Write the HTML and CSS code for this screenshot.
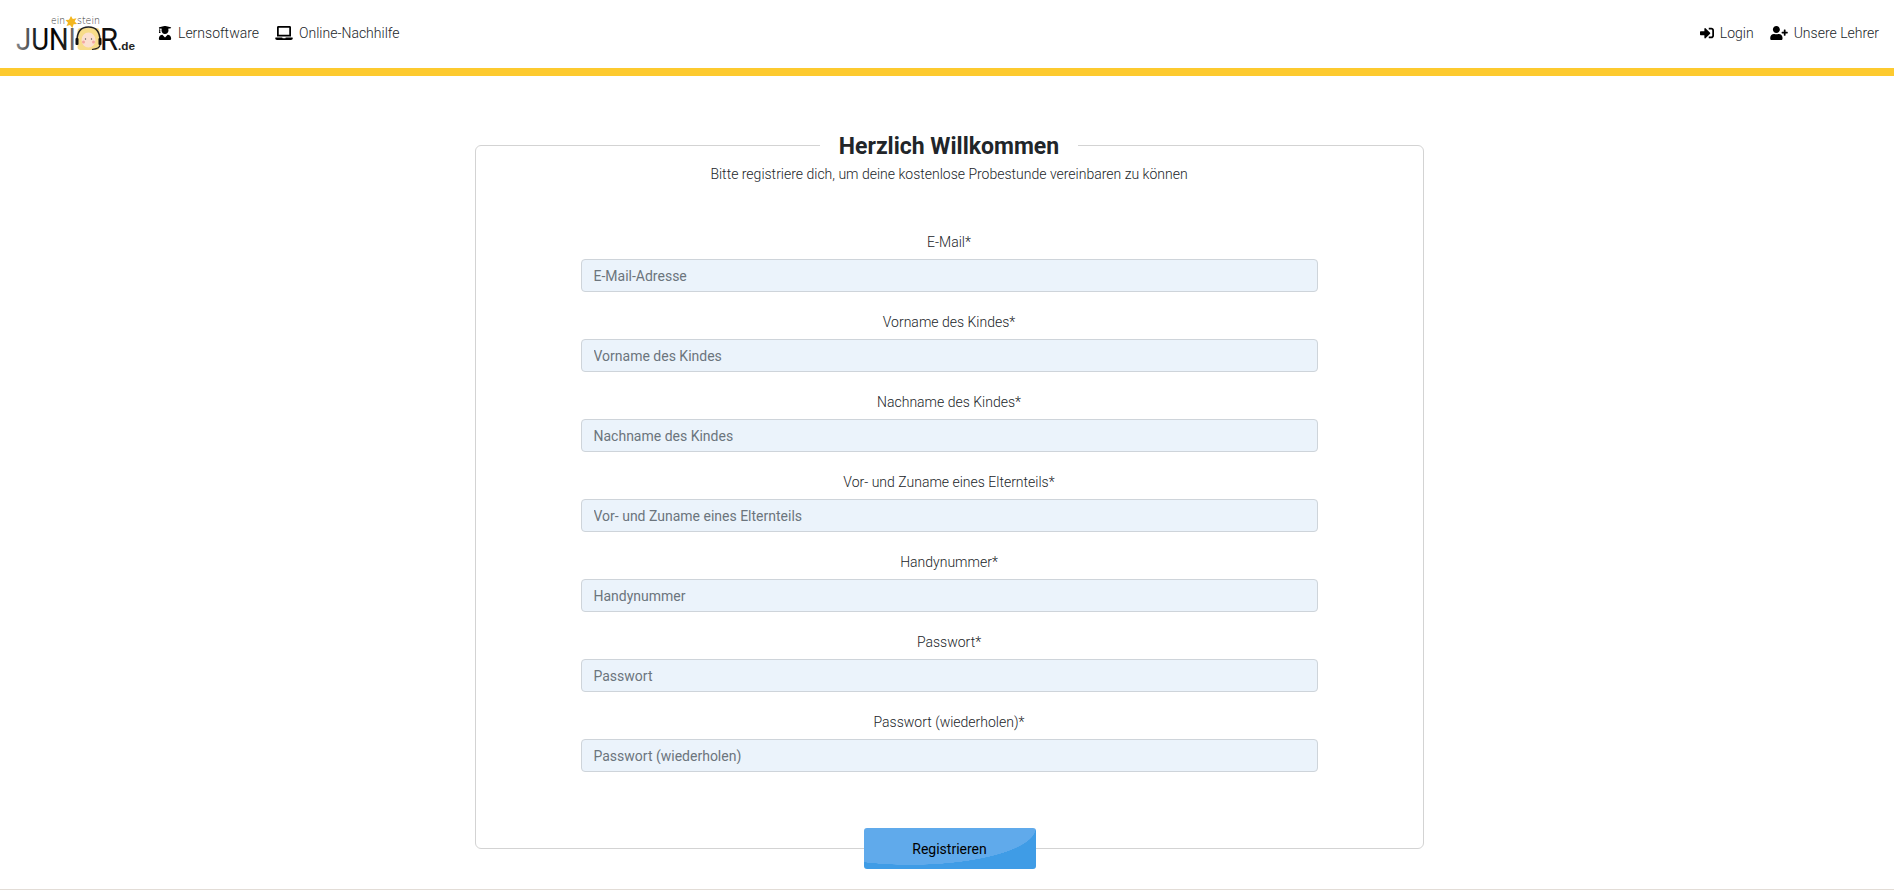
FILE: index.html
```html
<!DOCTYPE html>
<html lang="de">
<head>
    <meta charset="UTF-8">
    <title>Registrierung - Einstein Junior</title>
    <link rel="stylesheet" href="styles.css">
</head>
<body>
    <nav class="navbar">
        <a class="logo" href="#">
            <svg viewBox="0 0 122 40" width="122" height="40">
                <defs>
                    <linearGradient id="logoFill" x1="0" x2="1" y1="0" y2="0">
                        <stop offset="0" stop-color="#888"/>
                        <stop offset=".2" stop-color="#555"/>
                        <stop offset=".35" stop-color="#111"/>
                        <stop offset=".6" stop-color="#000"/>
                        <stop offset=".85" stop-color="#222"/>
                        <stop offset="1" stop-color="#999"/>
                    </linearGradient>
                </defs>
                <text class="logo-top" x="37" y="11" textLength="14" lengthAdjust="spacingAndGlyphs">ein</text>
                <text class="logo-top" x="63" y="11" textLength="23" lengthAdjust="spacingAndGlyphs">stein</text>
                <polygon fill="#f3b61f" points="57,3 58.8,6 62.5,5.2 60.6,8.3 63,11 59.6,11.2 58.4,15 56,12 52.5,13 54,9.8 51.5,7 55,6.8" />
                <text class="logo-main" x="2" y="37" textLength="60" lengthAdjust="spacingAndGlyphs" fill="url(#logoFill)">JUNI</text>
                <rect x="63.5" y="15" width="22" height="22" rx="3" fill="#f7dc8a" />
                <ellipse cx="74.5" cy="27" rx="7" ry="7.5" fill="#fbe0d0" />
                <path d="M63 28c0-10 4-14 11.500-14S86 18 86 28" fill="none" stroke="#222" stroke-width="1.500" />
                <rect x="61.500" y="25" width="3" height="7" rx="1" fill="#111" />
                <rect x="84.500" y="25" width="3" height="7" rx="1" fill="#111" />
                <path d="M86 32c0 3-4 4-8 4.500" fill="none" stroke="#222" stroke-width="1.200" />
                <circle cx="69.500" cy="29" r="1.500" fill="#f3a6a0" />
                <circle cx="79.500" cy="29" r="1.500" fill="#f3a6a0" />
                <circle cx="71.500" cy="26" r=".7" fill="#555" />
                <circle cx="77.500" cy="26" r=".7" fill="#555" />
                <text class="logo-main" x="86" y="37" textLength="18" lengthAdjust="spacingAndGlyphs" fill="#111">R</text>
                <text class="logo-de" x="104" y="37" textLength="17" lengthAdjust="spacingAndGlyphs">.de</text>
            </svg>
        </a>
        <div class="nav-left">
            <a class="nav-link" href="#">
                <svg class="icon" viewBox="0 0 448 512"><path d="M319.4 320.6L224 416l-95.4-95.4C57.1 323.7 0 382.2 0 454.4v9.6c0 26.5 21.5 48 48 48h352c26.5 0 48-21.5 48-48v-9.6c0-72.2-57.1-130.7-128.6-133.8zM13.6 79.8l6.4 1.5v58.4c-7 4.2-12 11.5-12 20.3 0 8.4 4.6 15.4 11.1 19.7L3.5 242c-1.7 6.9 2.1 14 7.6 14h41.8c5.5 0 9.3-7.1 7.6-14l-15.6-62.3C51.4 175.4 56 168.4 56 160c0-8.8-5-16.1-12-20.3V87.1l66 15.9c-8.6 17.2-14 36.4-14 57 0 70.7 57.3 128 128 128s128-57.3 128-128c0-20.6-5.3-39.8-14-57l96.3-23.2c18.2-4.4 18.2-27.1 0-31.5l-190.4-46c-13-3.1-26.7-3.1-39.7 0L13.6 48.2c-18.1 4.4-18.1 27.2 0 31.6z"/></svg>
                Lernsoftware
            </a>
            <a class="nav-link" href="#">
                <svg class="icon icon-wide" viewBox="0 0 640 512"><path d="M624 416H381.54c-.74 19.81-14.71 32-32.74 32H288c-18.69 0-33.02-17.47-32.77-32H16c-8.8 0-16 7.2-16 16v16c0 35.2 28.8 64 64 64h512c35.2 0 64-28.8 64-64v-16c0-8.8-7.2-16-16-16zM576 48c0-26.4-21.6-48-48-48H112C85.6 0 64 21.6 64 48v336h512V48zm-64 272H128V64h384v256z"/></svg>
                Online-Nachhilfe
            </a>
        </div>
        <div class="nav-right">
            <a class="nav-link" href="#">
                <svg class="icon icon-login" viewBox="0 0 512 512"><path d="M416 448h-84c-6.6 0-12-5.4-12-12v-40c0-6.6 5.4-12 12-12h84c17.7 0 32-14.3 32-32V160c0-17.7-14.3-32-32-32h-84c-6.6 0-12-5.4-12-12V76c0-6.6 5.4-12 12-12h84c53 0 96 43 96 96v192c0 53-43 96-96 96zm-47-201L201 79c-15-15-41-4.5-41 17v96H24c-13.3 0-24 10.7-24 24v96c0 13.3 10.7 24 24 24h136v96c0 21.5 26 32 41 17l168-168c9.3-9.4 9.3-24.6 0-34z"/></svg>
                Login
            </a>
            <a class="nav-link" href="#">
                <svg class="icon icon-wide" viewBox="0 0 640 512"><path d="M624 208h-64v-64c0-8.8-7.2-16-16-16h-32c-8.8 0-16 7.2-16 16v64h-64c-8.8 0-16 7.2-16 16v32c0 8.8 7.2 16 16 16h64v64c0 8.8 7.2 16 16 16h32c8.8 0 16-7.2 16-16v-64h64c8.8 0 16-7.2 16-16v-32c0-8.8-7.2-16-16-16zm-400 48c70.7 0 128-57.3 128-128S294.7 0 224 0 96 57.3 96 128s57.3 128 128 128zm89.6 32h-16.7c-22.2 10.2-46.9 16-72.9 16s-50.6-5.8-72.9-16h-16.7C60.2 288 0 348.2 0 422.4V464c0 26.5 21.5 48 48 48h352c26.5 0 48-21.5 48-48v-41.6c0-74.2-60.2-134.4-134.4-134.4z"/></svg>
                Unsere Lehrer
            </a>
        </div>
    </nav>

    <main class="main">
        <form class="card">
            <h1 class="card-title"><span>Herzlich Willkommen</span></h1>
            <p class="card-sub">Bitte registriere dich, um deine kostenlose Probestunde vereinbaren zu können</p>

            <div class="fields">
                <div class="field">
                    <label>E-Mail*</label>
                    <input type="text" placeholder="E-Mail-Adresse">
                </div>
                <div class="field">
                    <label>Vorname des Kindes*</label>
                    <input type="text" placeholder="Vorname des Kindes">
                </div>
                <div class="field">
                    <label>Nachname des Kindes*</label>
                    <input type="text" placeholder="Nachname des Kindes">
                </div>
                <div class="field">
                    <label>Vor- und Zuname eines Elternteils*</label>
                    <input type="text" placeholder="Vor- und Zuname eines Elternteils">
                </div>
                <div class="field">
                    <label>Handynummer*</label>
                    <input type="text" placeholder="Handynummer">
                </div>
                <div class="field">
                    <label>Passwort*</label>
                    <input type="password" placeholder="Passwort">
                </div>
                <div class="field">
                    <label>Passwort (wiederholen)*</label>
                    <input type="password" placeholder="Passwort (wiederholen)">
                </div>
            </div>

            <button class="submit" type="button">Registrieren</button>
        </form>
    </main>

    <div class="footer-line"></div>
</body>
</html>
```
FILE: styles.css
```css
html, body {
    height: 100%;
}
body {
    font-family: Roboto, "Liberation Sans", sans-serif;
    font-size: 14px;
    font-weight: 300;
    color: #212529;
    margin: 0;
    background-color: #fff;
    display: flex;
    flex-direction: column;
    overflow: hidden;
}
.navbar {
    flex: none;
    box-sizing: border-box;
    border-bottom: 8px solid #fdca2f;
    height: 76px;
    display: flex;
    align-items: center;
    padding: 0 15px 2px 14px;
}
.logo {
    display: block;
    width: 122px;
    height: 40px;
    margin-right: 22px;
}
.logo-top {
    font-family: "DejaVu Sans", sans-serif;
    font-size: 10px;
    fill: #333;
}
.logo-main {
    font-family: Roboto, sans-serif;
    font-weight: 400;
    font-size: 32px;
}
.logo-de {
    font-family: "Liberation Sans", sans-serif;
    font-weight: bold;
    font-size: 10px;
    fill: #222;
}
.nav-left, .nav-right {
    display: flex;
    gap: 16px;
}
.nav-right {
    margin-left: auto;
}
.nav-link {
    display: flex;
    align-items: center;
    gap: 6px;
    color: #212529;
    text-decoration: none;
    white-space: nowrap;
}
.icon {
    height: 14px;
    width: 14px;
    fill: #000;
}
.icon-wide {
    width: 18px;
}
.main {
    flex: 1;
    display: flex;
    justify-content: center;
    padding-top: 69px;
    padding-left: 4px;
}
.card {
    box-sizing: border-box;
    width: 949px;
    height: 704px;
    border: 1px solid #d3d3d3;
    border-radius: 6px;
    position: relative;
    text-align: center;
}
.card-title {
    margin: -14px 0 0 0;
    font-size: 23px;
    font-weight: 700;
    line-height: 29px;
}
.card-title span {
    background-color: #fff;
    padding: 0 19px;
}
.card-sub {
    margin: 3px 0 0 0;
    line-height: 21px;
}
.fields {
    width: 737px;
    margin: 47px auto 0 auto;
    display: flex;
    flex-direction: column;
    gap: 20px;
}
.field label {
    display: block;
    line-height: 21px;
    margin-bottom: 6px;
}
.field input {
    display: block;
    box-sizing: border-box;
    width: 100%;
    height: 33px;
    padding: 0 12px;
    border: 1px solid #ced4da;
    border-radius: 4px;
    background-color: #ebf3fb;
    font-family: inherit;
    font-size: 14px;
    font-weight: 400;
    color: #495057;
}
.field input::placeholder {
    color: #6c757d;
    opacity: 1;
}
.submit {
    position: absolute;
    left: 388px;
    bottom: -21px;
    width: 172px;
    height: 41px;
    border: 0;
    border-radius: 3px;
    background: radial-gradient(ellipse 73% 90% at 27% 0, #60aaeb 99.5%, #3f9ce6 100%);
    font-family: inherit;
    font-size: 14px;
    font-weight: 400;
    color: #000;
}
.footer-line {
    flex: none;
    height: 1px;
    background-color: #e2dcd6;
}
```
